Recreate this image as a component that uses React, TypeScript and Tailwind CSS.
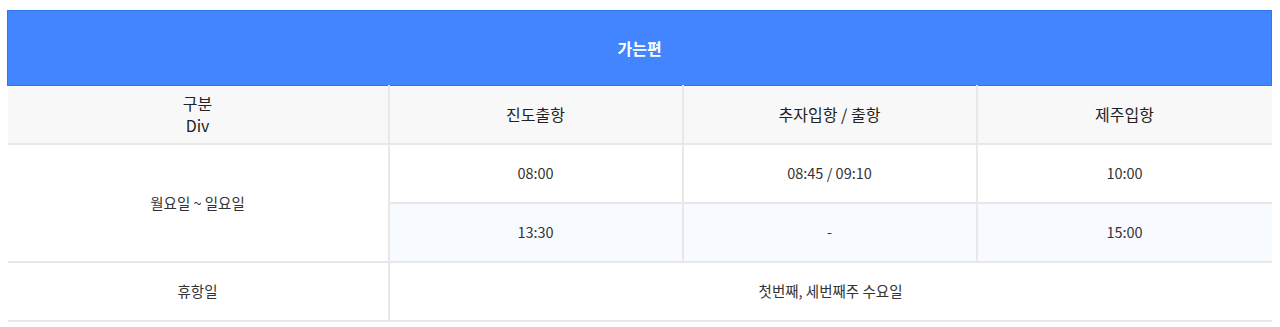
const font = { fontFamily: '"Noto Sans CJK KR", "Noto Sans", sans-serif' }

const rows = [
  ["08:00", "08:45 / 09:10", "10:00"],
  ["13:30", "-", "15:00"],
]

export default function App() {
  return (
    <div className="min-h-screen bg-white pt-[10px] pl-[7px]" style={font}>
      <table className="w-[1264px] table-fixed border-collapse text-center">
        <colgroup>
          <col className="w-[381px]" />
          <col className="w-[294px]" />
          <col className="w-[294px]" />
          <col className="w-[295px]" />
        </colgroup>
        <thead>
          <tr>
            <th
              colSpan={4}
              className="h-[75px] border border-[#2f76f5] bg-[#4285ff] text-[16px] font-bold text-white"
            >
              가는편
            </th>
          </tr>
          <tr className="bg-[#f8f8f8] text-[16px] font-normal text-[#222]">
            <th className="h-[58px] border-b-2 border-r-2 border-[#e8e8e8] font-normal leading-[22px]">
              구분
              <br />
              Div
            </th>
            <th className="border-b-2 border-r-2 border-[#e8e8e8] font-normal">진도출항</th>
            <th className="border-b-2 border-r-2 border-[#e8e8e8] font-normal">추자입항 / 출항</th>
            <th className="border-b-2 border-[#e8e8e8] font-normal">제주입항</th>
          </tr>
        </thead>
        <tbody className="text-[14.5px] text-[#333]">
          {rows.map((r, i) => (
            <tr key={i} className={i === 1 ? "bg-[#f7faff]" : "bg-white"}>
              {i === 0 && (
                <td rowSpan={2} className="border-b-2 border-r-2 border-[#e8e8e8] bg-white">
                  월요일 ~ 일요일
                </td>
              )}
              {r.map((c, j) => (
                <td
                  key={j}
                  className={`h-[59px] border-b-2 border-[#e8e8e8] ${j < 2 ? "border-r-2" : ""}`}
                >
                  {c}
                </td>
              ))}
            </tr>
          ))}
          <tr>
            <td className="h-[59px] border-b-2 border-r-2 border-[#e8e8e8]">휴항일</td>
            <td colSpan={3} className="border-b-2 border-[#e8e8e8]">
              첫번째, 세번째주 수요일
            </td>
          </tr>
        </tbody>
      </table>
    </div>
  )
}
